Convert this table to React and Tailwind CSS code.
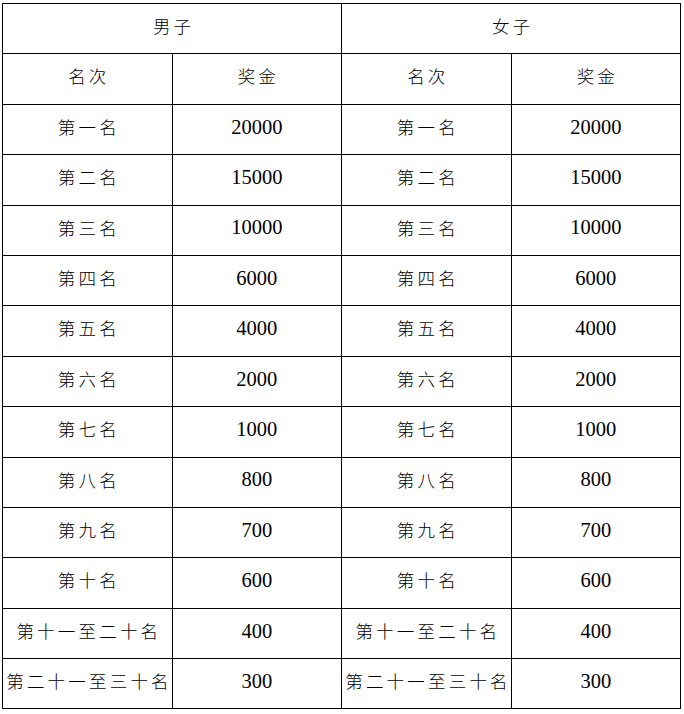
const ranks = [
  ["第一名", "20000"],
  ["第二名", "15000"],
  ["第三名", "10000"],
  ["第四名", "6000"],
  ["第五名", "4000"],
  ["第六名", "2000"],
  ["第七名", "1000"],
  ["第八名", "800"],
  ["第九名", "700"],
  ["第十名", "600"],
  ["第十一至二十名", "400"],
  ["第二十一至三十名", "300"],
];

const cjk = "font-['Noto_Sans_CJK_SC',sans-serif] text-[17.5px] font-light tracking-[3.2px] pl-[3.2px]";
const num = "font-['Liberation_Serif','Times_New_Roman',serif] text-[20.5px]";
const cell = "border border-black text-center align-middle pb-[5px] px-0";

function App() {
  return (
    <div className="min-h-screen bg-white pt-[3px] pl-[2px] text-black">
      <table className="w-[679px] table-fixed border-collapse">
        <tbody>
          <tr className="h-[50.4px]">
            <td colSpan={2} className={`${cell} ${cjk}`}>男子</td>
            <td colSpan={2} className={`${cell} ${cjk}`}>女子</td>
          </tr>
          <tr className="h-[50.4px]">
            <td className={`${cell} ${cjk}`}>名次</td>
            <td className={`${cell} ${cjk}`}>奖金</td>
            <td className={`${cell} ${cjk}`}>名次</td>
            <td className={`${cell} ${cjk}`}>奖金</td>
          </tr>
          {ranks.map(([rank, prize]) => (
            <tr className="h-[50.4px]" key={rank}>
              <td className={`${cell} ${cjk} whitespace-nowrap`}>{rank}</td>
              <td className={`${cell} ${num}`}>{prize}</td>
              <td className={`${cell} ${cjk} whitespace-nowrap`}>{rank}</td>
              <td className={`${cell} ${num}`}>{prize}</td>
            </tr>
          ))}
        </tbody>
      </table>
    </div>
  );
}

export default App;
